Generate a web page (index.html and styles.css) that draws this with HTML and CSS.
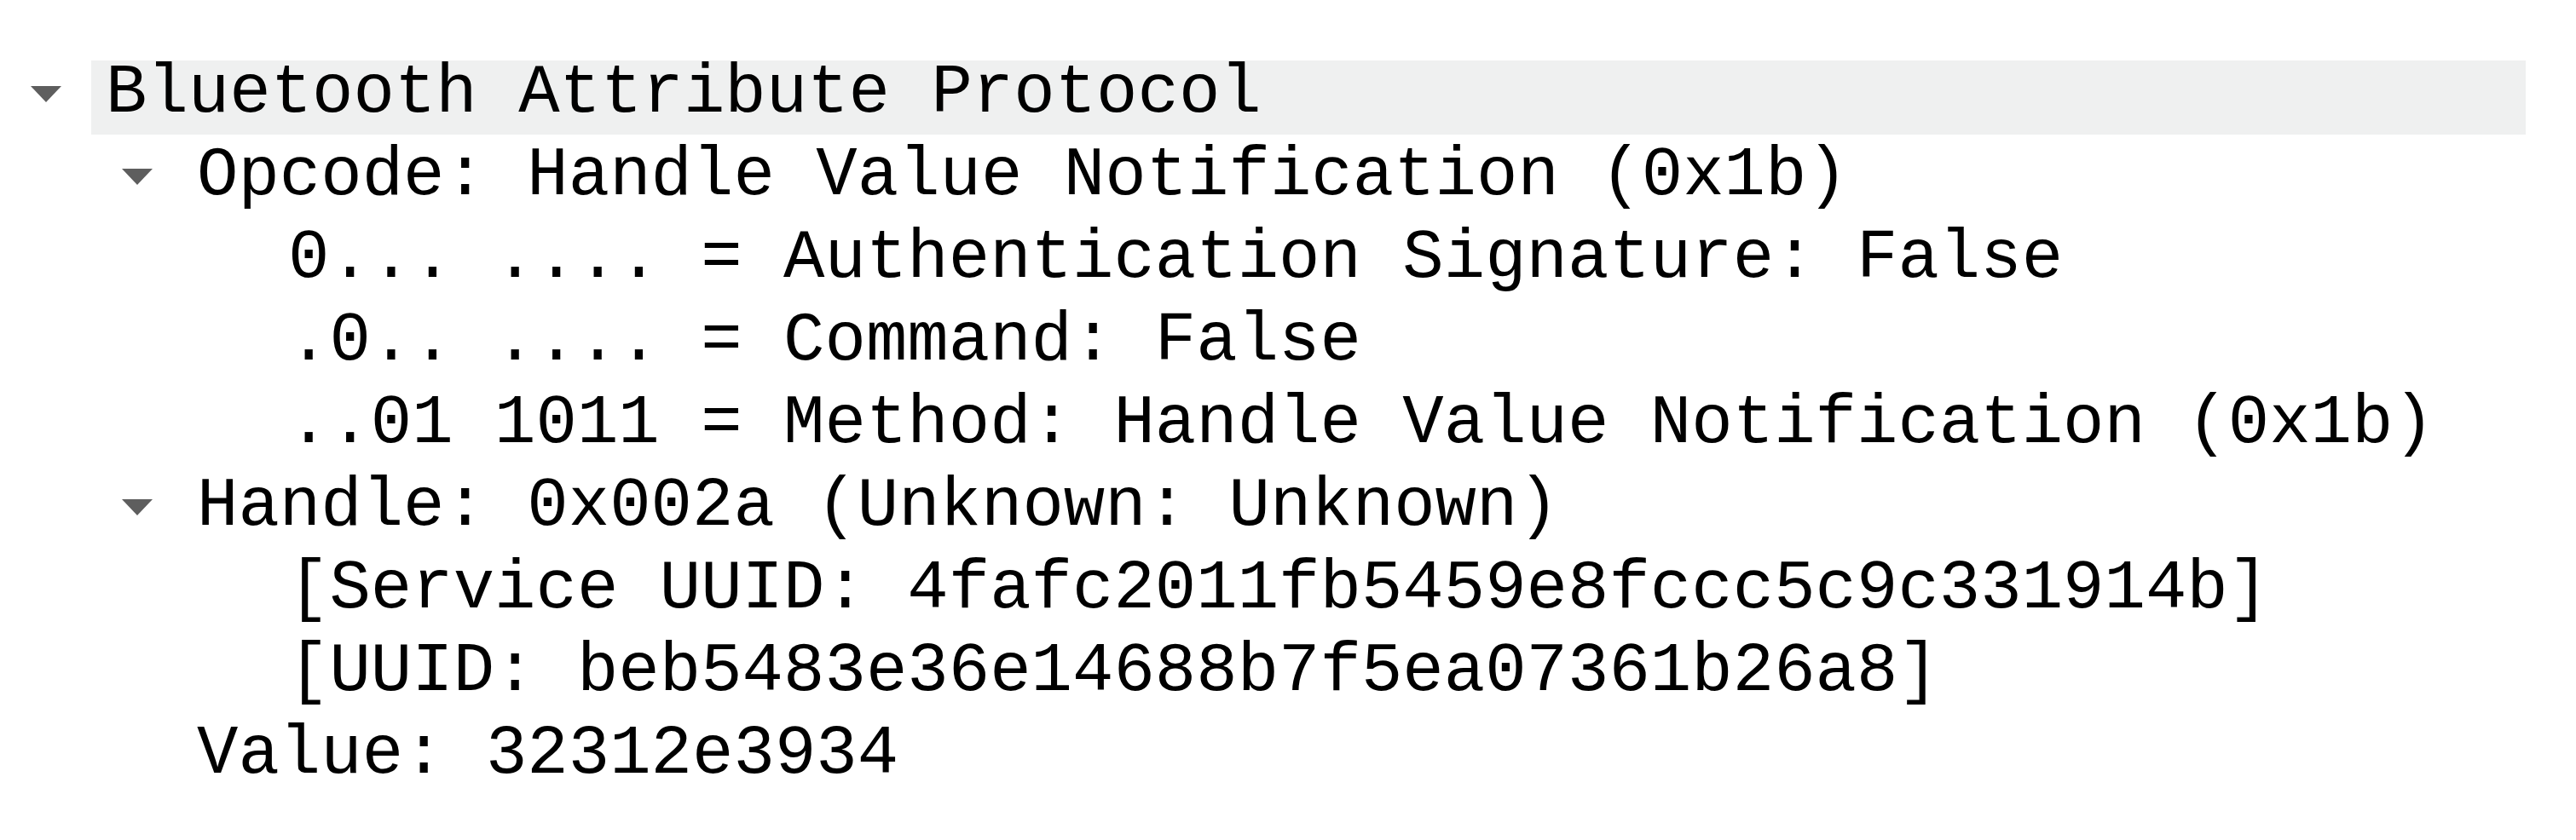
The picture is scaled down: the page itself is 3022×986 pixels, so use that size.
FILE: index.html
```html
<!DOCTYPE html>
<html>
<head>
    <title>Packet Details</title>
    <link rel="stylesheet" href="styles.css">
</head>
<body>
    <div class="tree">
        <div class="row level-0 selected">
            <span class="toggle"><svg viewBox="0 0 40 20" width="40" height="20"><polygon points="2,1 38,1 20,20"/></svg></span>
            <span class="label">Bluetooth Attribute Protocol</span>
        </div>
        <div class="row level-1">
            <span class="toggle"><svg viewBox="0 0 40 20" width="40" height="20"><polygon points="2,1 38,1 20,20"/></svg></span>
            <span class="label">Opcode: Handle Value Notification (0x1b)</span>
        </div>
        <div class="row level-2">
            <span class="toggle"></span>
            <span class="label">0... .... = Authentication Signature: False</span>
        </div>
        <div class="row level-2">
            <span class="toggle"></span>
            <span class="label">.0.. .... = Command: False</span>
        </div>
        <div class="row level-2">
            <span class="toggle"></span>
            <span class="label">..01 1011 = Method: Handle Value Notification (0x1b)</span>
        </div>
        <div class="row level-1">
            <span class="toggle"><svg viewBox="0 0 40 20" width="40" height="20"><polygon points="2,1 38,1 20,20"/></svg></span>
            <span class="label">Handle: 0x002a (Unknown: Unknown)</span>
        </div>
        <div class="row level-2">
            <span class="toggle"></span>
            <span class="label">[Service UUID: 4fafc2011fb5459e8fccc5c9c331914b]</span>
        </div>
        <div class="row level-2">
            <span class="toggle"></span>
            <span class="label">[UUID: beb5483e36e14688b7f5ea07361b26a8]</span>
        </div>
        <div class="row level-1">
            <span class="toggle"></span>
            <span class="label">Value: 32312e3934</span>
        </div>
    </div>
</body>
</html>
```

FILE: styles.css
```css
:root {
    --indent: 107px;
    --row-height: 87px;
    --row-gap: 10px;
    --selected: #eff0f0;
    --arrow: #5e5e5e;
}

body {
    margin: 0;
    background-color: #ffffff;
    color: #000000;
    font-family: "Liberation Mono", "DejaVu Sans Mono", monospace;
    font-size: 80.7px;
}

.tree {
    padding: 71px 59px 0 0;
}

.row {
    display: flex;
    height: var(--row-height);
    margin-bottom: var(--row-gap);
    line-height: 77px;
    white-space: pre;
}

.level-1 {
    padding-left: var(--indent);
}

.level-2 {
    padding-left: calc(var(--indent) * 2);
}

.toggle {
    flex: 0 0 var(--indent);
    display: flex;
    justify-content: center;
    padding-top: 29px;
    box-sizing: border-box;
}

.toggle svg {
    fill: var(--arrow);
}

.label {
    flex: 1;
    padding-left: 17px;
}

.selected .label {
    background-color: var(--selected);
}
```
